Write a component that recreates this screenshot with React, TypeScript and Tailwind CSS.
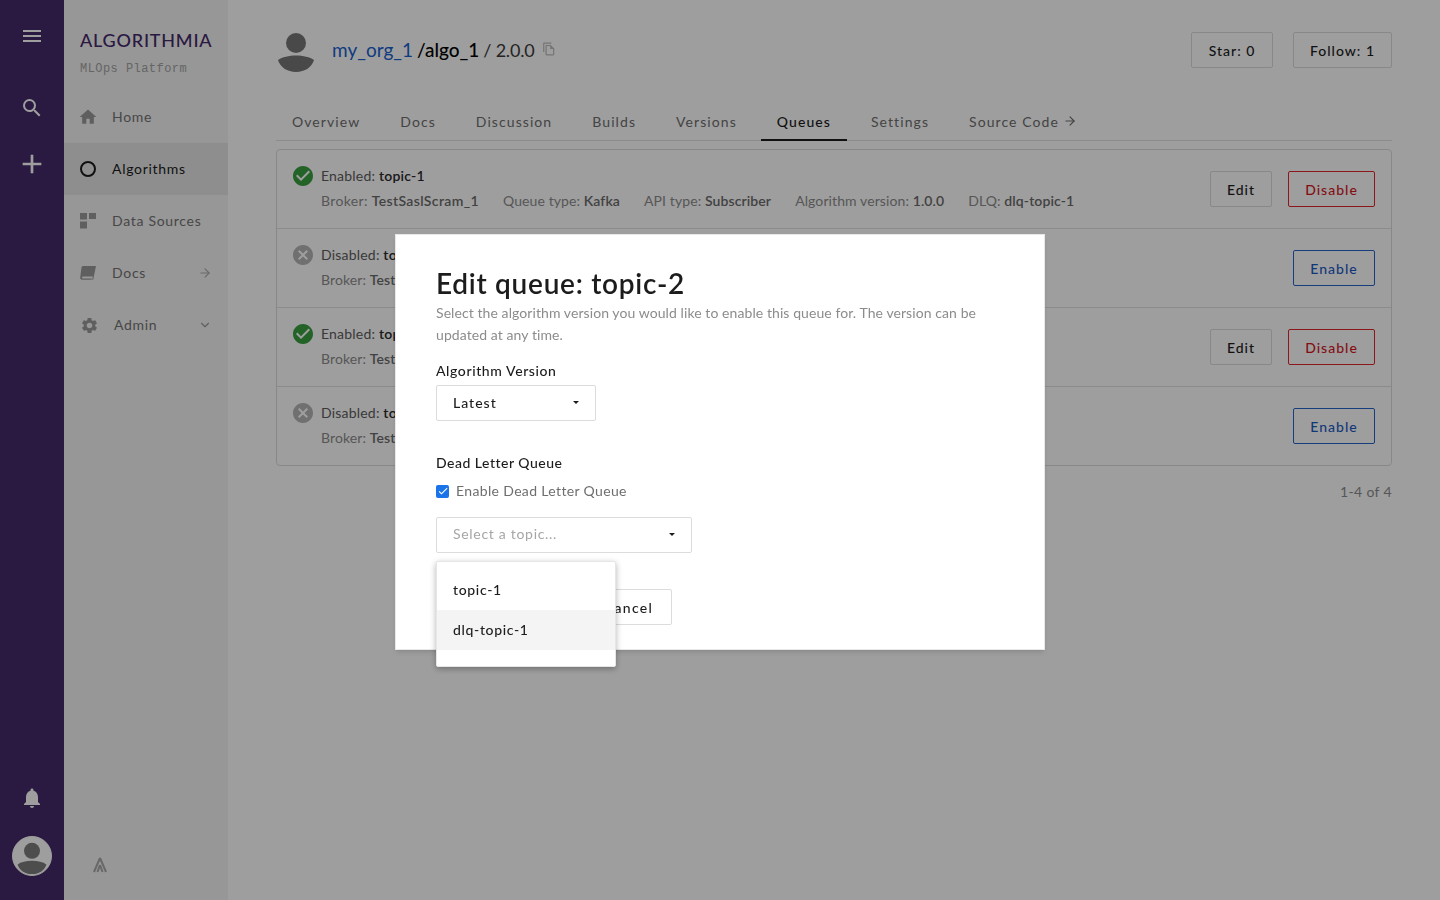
import { ArrowRight, ChevronDown } from "lucide-react";
import {
  MdAdd,
  MdCancel,
  MdCheck,
  MdCheckCircle,
  MdHome,
  MdMenu,
  MdNotifications,
  MdOutlineFileCopy,
  MdSearch,
  MdSettings,
} from "react-icons/md";

function Person({ className }: { className?: string }) {
  return (
    <svg viewBox="0 0 40 42" className={className} fill="currentColor">
      <circle cx="20" cy="12" r="10" />
      <path d="M2 29c4-3 11-4.500 18-4.500S34 26 38 29c-2 7-9 12-18 12S4 36 2 29z" />
    </svg>
  );
}

function LogoMark({ className }: { className?: string }) {
  return (
    <svg viewBox="0 0 16 16" className={className} fill="none" stroke="currentColor" strokeWidth="2">
      <path d="M8 1 2 15M8 1l6 14M8 8l-2.500 7M8 8l2.500 7" />
    </svg>
  );
}

function DataIcon() {
  return (
    <svg viewBox="0 0 16 16" className="w-4 h-4 shrink-0" fill="currentColor">
      <rect x="0" y="0" width="7" height="6.500" />
      <rect x="9" y="0" width="7" height="6" />
      <rect x="0" y="8.500" width="7" height="7" />
    </svg>
  );
}

function BookIcon() {
  return (
    <svg viewBox="0 0 16 14" className="w-4 h-[14px] shrink-0" fill="currentColor">
      <path d="M3.400 0H16l-2 9.800-.8 3.900h-1L14 4.500 13.300 10.500H3.500c-1 0-1.500.5-1.500 1s.5 1 1.300 1h8.500l-.3 1.300H2.300C.800 13.800 0 12.900.200 11.600L1.500 1.500C1.700.500 2.400 0 3.400 0z" />
    </svg>
  );
}

const navItems = [
  { label: "Home", icon: <MdHome size={20} className="shrink-0" />, active: false },
  { label: "Algorithms", icon: <span className="block w-4 h-4 rounded-full border-2 border-[#1c1c1c]" />, active: true },
  { label: "Data Sources", icon: <DataIcon />, active: false },
  { label: "Docs", icon: <BookIcon />, active: false, arrow: true },
  { label: "Admin", icon: <MdSettings size={19} className="shrink-0 ml-[2px]" />, active: false, chevron: true },
];

const tabs = ["Overview", "Docs", "Discussion", "Builds", "Versions", "Queues", "Settings"];

const queues = [
  { enabled: true, topic: "topic-1", full: true },
  { enabled: false, topic: "topic-2", full: false },
  { enabled: true, topic: "topic-3", full: false },
  { enabled: false, topic: "topic-4", full: false },
];

function Rail() {
  return (
    <div className="w-16 shrink-0 bg-[#44296a] flex flex-col items-center text-white">
      <MdMenu size={24} className="mt-6" />
      <MdSearch size={24} className="mt-[48px]" />
      <MdAdd size={32} className="mt-[28px]" />
      <MdNotifications size={24} className="mt-auto" />
      <div className="mt-[26px] mb-6 w-10 h-10 rounded-full bg-white overflow-hidden flex items-center justify-center border border-white">
        <Person className="w-8 h-9 text-[#7c7c7c] mt-1" />
      </div>
    </div>
  );
}

function Sidebar() {
  return (
    <div className="w-[164px] shrink-0 bg-[#f4f4f4] flex flex-col relative">
      <div className="pl-4 pt-[29px] h-[91px]">
        <div className="text-[#44296a] text-[18px] leading-[22px] tracking-[0.8px] font-medium whitespace-nowrap font-['Lato']">ALGORITHMIA</div>
        <div className="mt-[10px] text-[12px] leading-4 tracking-[0.45px] text-[#a3a3a3] font-['Liberation_Mono',monospace]">MLOps Platform</div>
      </div>
      {navItems.map((item) => (
        <div
          key={item.label}
          className={`h-[52px] pl-4 pr-4 flex items-center text-[14px] tracking-[0.7px] ${item.active ? "bg-[#e6e6e6] text-[#1c1c1c]" : "text-[#737373]"}`}
        >
          <span className={`w-4 flex justify-center ${item.active ? "" : "text-[#999]"}`}>{item.icon}</span>
          <span className={`mb-[2px] ${item.label === "Admin" ? "ml-[18px]" : "ml-4"}`}>{item.label}</span>
          {item.arrow && <ArrowRight size={14} className="ml-auto text-[#aaa]" />}
          {item.chevron && <ChevronDown size={14} className="ml-auto text-[#999]" />}
        </div>
      ))}
      <LogoMark className="absolute left-[28px] bottom-[27px] w-4 h-4 text-[#a8a8a8]" />
    </div>
  );
}

function QueueRow({ enabled, topic, full, last }: { enabled: boolean; topic: string; full: boolean; last: boolean }) {
  return (
    <div className={`flex items-center pl-4 pr-4 ${last ? "h-[78px]" : "h-[79px] border-b border-[#e0e0e0]"}`}>
      <div className="flex-1 pb-[2px]">
        <div className="flex items-center h-5 text-[14px] tracking-[0.2px] text-[#5c5c5c]">
          {enabled ? (
            <MdCheckCircle size={24} className="text-[#3aa03f] -ml-[2px] mr-[6px]" />
          ) : (
            <MdCancel size={24} className="text-[#b5b5b5] -ml-[2px] mr-[6px]" />
          )}
          <span>
            {enabled ? "Enabled" : "Disabled"}: <span className="font-semibold text-[#2a2a2a]">{topic}</span>
          </span>
        </div>
        {full ? (
          <div className="mt-1 pl-7 flex gap-6 text-[14px] tracking-[0.1px] text-[#8c8c8c]">
            <span className="tracking-[0.35px]">Broker: <b className="font-semibold text-[#6b6b6b]">TestSaslScram_1</b></span>
            <span>Queue type: <b className="font-semibold text-[#6b6b6b]">Kafka</b></span>
            <span>API type: <b className="font-semibold text-[#6b6b6b]">Subscriber</b></span>
            <span>Algorithm version: <b className="font-semibold text-[#6b6b6b]">1.0.0</b></span>
            <span>DLQ: <b className="font-semibold text-[#6b6b6b]">dlq-topic-1</b></span>
          </div>
        ) : (
          <div className="mt-1 pl-7 text-[14px] tracking-[0.1px] text-[#8c8c8c]">
            Broker: <b className="font-semibold text-[#6b6b6b]">Test</b>
          </div>
        )}
      </div>
      {enabled ? (
        <div className="flex gap-4">
          <button className="h-9 w-[62px] border border-[#dcdcdc] rounded-[2px] text-[14px] tracking-[1px] font-medium text-[#1c1c1c]">Edit</button>
          <button className="h-9 w-[87px] border border-[#e0262c] rounded-[2px] text-[14px] tracking-[1px] font-medium text-[#d3181f]">Disable</button>
        </div>
      ) : (
        <button className="h-9 w-[82px] border border-[#2563c9] rounded-[2px] text-[14px] tracking-[1px] font-medium text-[#1e5ac4]">Enable</button>
      )}
    </div>
  );
}

function Main() {
  return (
    <div className="flex-1 bg-white px-12">
      <div className="h-[100px] flex items-start">
        <Person className="w-10 h-[42px] mt-[31px] text-[#777]" />
        <div className="ml-4 mt-[38px] text-[19px] leading-6 flex items-center text-[#3b3b3b]">
          <span className="text-[#1a5fd0]">my_org_1</span>
          <span className="ml-1 text-black font-medium">/algo_1</span>
          <span className="ml-1 text-[18px] tracking-[-0.2px]">/ 2.0.0</span>
          <MdOutlineFileCopy size={14} className="ml-2 mb-[2px] text-[#bbb]" />
        </div>
        <div className="ml-auto mt-8 flex gap-5">
          <button className="h-9 w-[82px] border border-[#dcdcdc] rounded-[2px] text-[14px] tracking-[1px] font-medium text-[#1c1c1c]">Star: 0</button>
          <button className="h-9 w-[99px] border border-[#dcdcdc] rounded-[2px] text-[14px] tracking-[1px] font-medium text-[#1c1c1c]">Follow: 1</button>
        </div>
      </div>
      <div className="h-[41px] flex gap-2 border-b border-[#e0e0e0] text-[14px] tracking-[1.08px] text-[#6e6e6e]">
        {tabs.map((t) => (
          <div key={t} className={`h-[41px] px-4 pt-[11px] ${t === "Queues" ? "border-b-2 border-[#1c1c1c] text-[#1c1c1c] font-medium" : ""}`}>
            {t}
          </div>
        ))}
        <div className="h-[41px] px-4 pt-[11px] flex items-start gap-1">
          Source Code <ArrowRight size={14} className="mt-[3px]" />
        </div>
      </div>
      <div className="mt-2 border border-[#dcdcdc] rounded-[4px] overflow-hidden">
        {queues.map((q, i) => (
          <QueueRow key={q.topic} enabled={q.enabled} topic={q.topic} full={q.full} last={i === queues.length - 1} />
        ))}
      </div>
      <div className="mt-[15px] text-right text-[14px] text-[#8c8c8c] tracking-[0.35px]">1-4 of 4</div>
    </div>
  );
}

function Modal() {
  return (
    <div className="fixed inset-0 bg-black/38 flex justify-center items-start pt-[234px]">
      <div className="relative w-[650px] h-[416px] bg-white shadow-md border border-[#e8e8e8] pl-10 pr-10 pt-[28px]">
        <h1 className="text-[28px] leading-[40px] font-semibold text-[#1c1c1c] tracking-[0.72px]">Edit queue: topic-2</h1>
        <p className="mt-[-1px] text-[14px] leading-[21.500px] tracking-[0.08px] text-[#8c8c8c]">
          Select the algorithm version you would like to enable this queue for. The version can be updated at any time.
        </p>
        <div className="mt-[16px] text-[14px] leading-5 font-medium tracking-[0.6px] text-[#1c1c1c]">Algorithm Version</div>
        <div className="mt-1 w-40 h-9 border border-[#dcdcdc] rounded-[2px] flex items-center pl-4 pr-4 text-[14px] tracking-[1px] font-medium text-[#1c1c1c]">
          <span className="mb-[2px]">Latest</span>
          <span className="ml-auto mb-[2px] border-x-[3.500px] border-x-transparent border-t-[3.500px] border-t-[#1c1c1c]" />
        </div>
        <div className="mt-8 text-[14px] leading-5 font-medium tracking-[0.5px] text-[#1c1c1c]">Dead Letter Queue</div>
        <div className="mt-2 h-5 flex items-center text-[14px] tracking-[0.35px] text-[#6e6e6e]">
          <span className="w-[13px] h-[13px] rounded-[2px] bg-[#1a73e8] text-white flex items-center justify-center">
            <MdCheck size={12} />
          </span>
          <span className="ml-[7px] mb-[2px]">Enable Dead Letter Queue</span>
        </div>
        <div className="mt-4 w-64 h-9 border border-[#dcdcdc] rounded-[2px] flex items-center pl-4 pr-4 text-[14px] tracking-[0.7px] text-[#a6a6a6]">
          <span className="mb-[3px]">Select a topic...</span>
          <span className="ml-auto mb-[2px] border-x-[3.500px] border-x-transparent border-t-[3.500px] border-t-[#1c1c1c]" />
        </div>
        <div className="mt-9 flex justify-end w-[236px]">
          <button className="h-9 w-[89px] pl-[2px] border border-[#dcdcdc] rounded-[2px] text-[14px] tracking-[1.3px] font-medium text-[#1c1c1c]">Cancel</button>
        </div>
        <div className="absolute left-10 top-[326px] w-[180px] h-[106px] bg-white rounded-[2px] border border-[#e6e6e6] shadow-[0_2px_6px_rgba(0,0,0,0.3)] pt-2 text-[14px] tracking-[0.65px] font-medium text-[#1c1c1c]">
          <div className="h-10 pl-4 pb-[2px] flex items-center">topic-1</div>
          <div className="h-10 pl-4 pb-[2px] flex items-center bg-[#f4f4f4]">dlq-topic-1</div>
        </div>
      </div>
    </div>
  );
}

export default function App() {
  return (
    <div className="h-[900px] w-[1440px] flex overflow-hidden font-['Lato',sans-serif]">
      <Rail />
      <Sidebar />
      <Main />
      <Modal />
    </div>
  );
}
